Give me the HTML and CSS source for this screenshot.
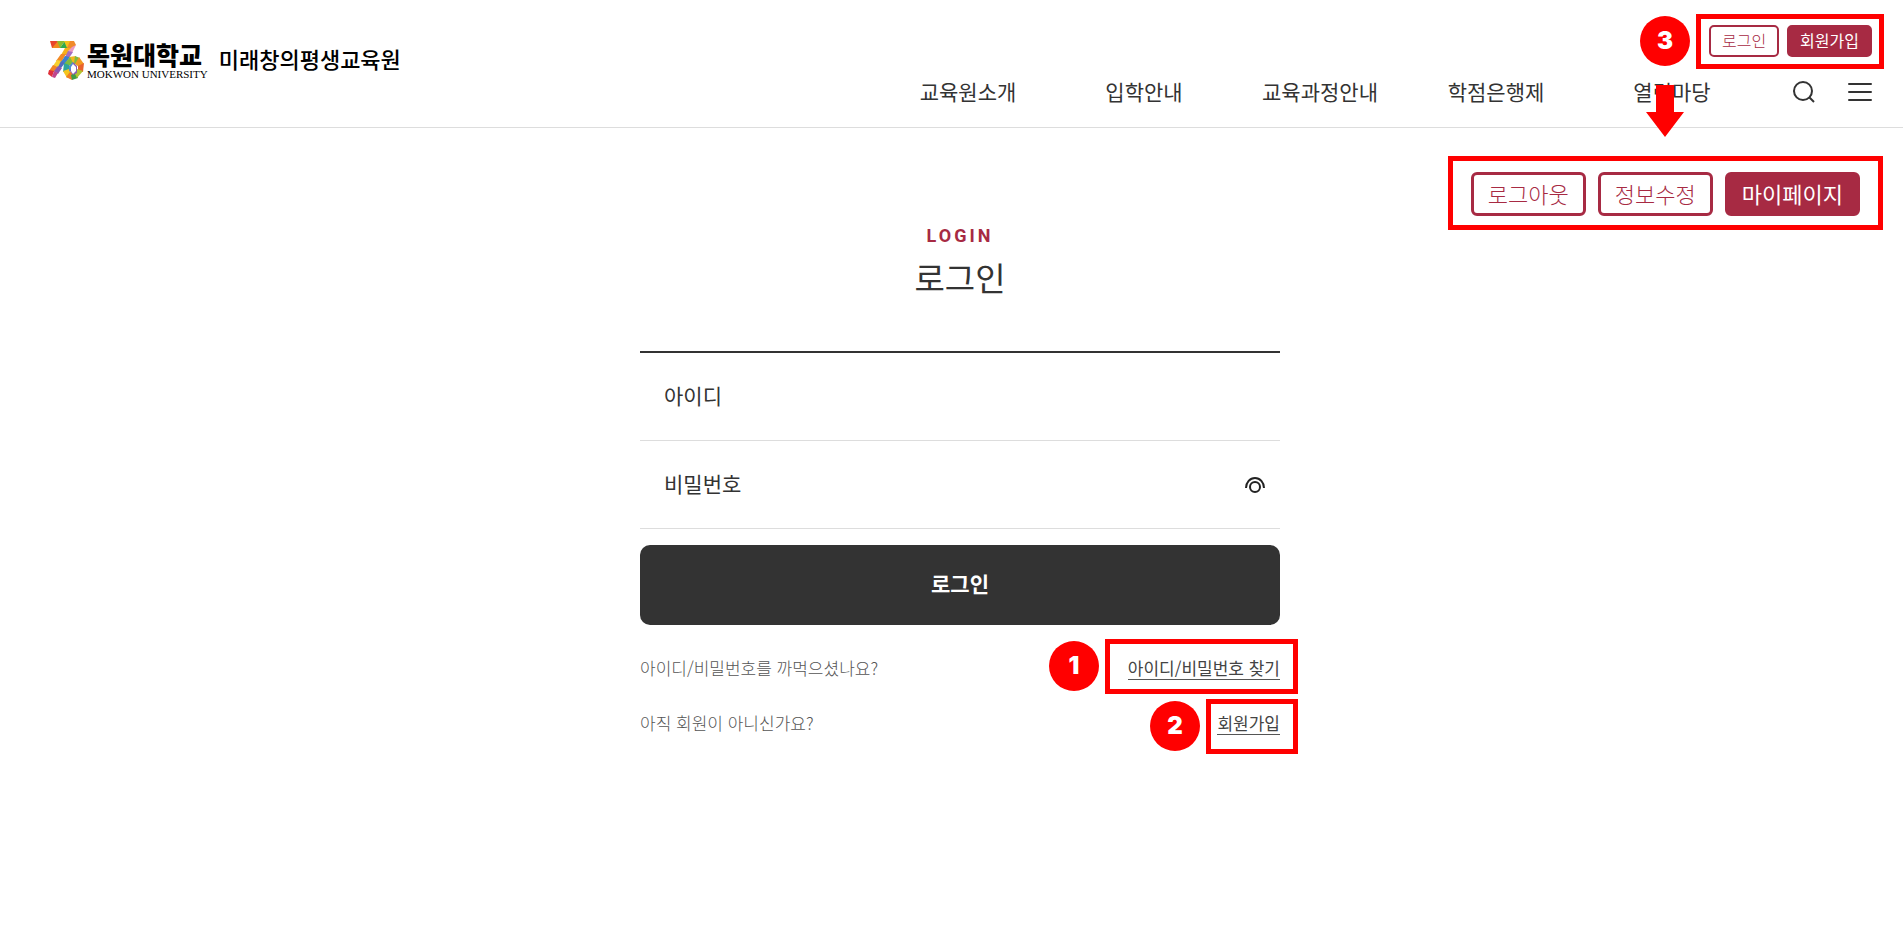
FILE: index.html
```html
<!DOCTYPE html>
<html lang="ko">
<head>
    <meta charset="UTF-8">
    <meta name="viewport" content="width=device-width, initial-scale=1.0">
    <title>로그인 | 목원대학교 미래창의평생교육원</title>
    <link rel="stylesheet" href="styles.css">
</head>
<body>

    <header class="header">
        <a class="logo" href="#">
            <svg class="logo-mark" width="36" height="40" viewBox="0 0 36 40" aria-hidden="true">
                <!-- 7 -->
                <path fill="#e8452c" d="M2 1h8v7H4z"/>
                <path fill="#f18a1f" d="M4 8l6-7 3 7z"/>
                <path fill="#8dbb2e" d="M9 1h8l-5 7z"/>
                <path fill="#2fa94c" d="M12 8l5-7 3 7z"/>
                <path fill="#f6c01c" d="M16 1h8l-5 7z"/>
                <path fill="#f08a2a" d="M22 1h4l2 4-5 5-4-2z"/>
                <path fill="#f6b01c" d="M17 8h6l-4 7-6 0z"/>
                <path fill="#f28a24" d="M13 14h5l-4 7-6 0z"/>
                <path fill="#f8cf2d" d="M9 20l5 1-4 6-5-1z"/>
                <path fill="#f28324" d="M5 25l5 2-4 5-5-1z"/>
                <path fill="#e0303a" d="M1 30l5 1-2 6-4-3z"/>
                <path fill="#eb9ac0" d="M28 5l-4 8-4-2 4-4z"/>
                <path fill="#a56cc0" d="M20 11l5 1-4 6-4-1z"/>
                <path fill="#3a80d0" d="M17 16l5 1-5 7-4-2z"/>
                <path fill="#4f6cc0" d="M13 21l4 2-4 5-3-1z"/>
                <path fill="#8a58b0" d="M10 26l4 2-4 6-4-3z"/>
                <path fill="#c0458c" d="M6 31l4 2-3 5-3-1z"/>
                <!-- 0 -->
                <path fill="#f2b81e" d="M21 17l7-1-1 8-5 2z"/>
                <path fill="#7dbb42" d="M27 16l5 2-3 6-3 0z"/>
                <path fill="#f19a20" d="M31 17l5 7-5 3-4-3z"/>
                <path fill="#e9622c" d="M36 23l-1 9-5-1 0-5z"/>
                <path fill="#7dbb42" d="M22 17l-6 7 5 2 4-3z"/>
                <path fill="#2ea59a" d="M16 23l-1 9 7-1-1-6z"/>
                <path fill="#f5c51d" d="M15 31l4 7 5-4-3-5z"/>
                <path fill="#ef7d24" d="M18 37l6 3 3-6-5-2z"/>
                <path fill="#3e9d45" d="M24 40l6-2-2-6-5 3z"/>
                <path fill="#b4c52f" d="M29 38l6-7-6-2-2 5z"/>
                <path fill="#8a5fb4" d="M25 22l4 4 0 7-4 2-3-4 0-5z"/>
                <path fill="#4f8fd0" d="M25 22l-4 4 0 6 4-6z"/>
                <path fill="#fff" d="M25 24l3 3v4l-3 3-2-3v-4z"/>
            </svg>
            <span class="logo-univ">
                <strong class="logo-ko">목원대학교</strong>
                <span class="logo-en">MOKWON UNIVERSITY</span>
            </span>
            <span class="logo-center">미래창의평생교육원</span>
        </a>

        <div class="header-side">
            <div class="member member-top">
                <a class="member-btn" href="#">로그인</a>
                <a class="member-btn member-btn-fill" href="#">회원가입</a>
                <span class="mark mark-member"><b class="mark-num">3</b></span>
            </div>
            <div class="header-menu">
                <nav class="gnb">
                    <a href="#">교육원소개</a>
                    <a href="#">입학안내</a>
                    <a href="#">교육과정안내</a>
                    <a href="#">학점은행제</a>
                    <a href="#">열린마당</a>
                </nav>
                <button class="icon-btn" type="button" aria-label="검색">
                    <svg width="24" height="24" viewBox="0 0 24 24" fill="none" stroke="#333" stroke-width="2">
                        <circle cx="11" cy="11" r="9"/>
                        <path d="M17 17l5 5"/>
                    </svg>
                </button>
                <button class="icon-btn" type="button" aria-label="전체메뉴">
                    <svg width="24" height="24" viewBox="0 0 24 24" fill="none" stroke="#333" stroke-width="2" stroke-linecap="round">
                        <path d="M1 4h22M1 12h22M1 20h22"/>
                    </svg>
                </button>
            </div>
        </div>
    </header>

    <!-- member buttons after login -->
    <div class="after-login">
        <svg class="arrow" width="38" height="52" viewBox="0 0 38 52" aria-hidden="true">
            <path fill="#f00" d="M10 0h18v27h10L19 52 0 27h10z"/>
        </svg>
        <div class="member member-big">
            <a class="member-btn" href="#">로그아웃</a>
            <a class="member-btn" href="#">정보수정</a>
            <a class="member-btn member-btn-fill" href="#">마이페이지</a>
        </div>
    </div>

    <main class="main">
        <section class="login">
            <p class="login-en">LOGIN</p>
            <h1 class="login-title">로그인</h1>

            <form class="login-form">
                <div class="field">
                    <label for="userId">아이디</label>
                    <input id="userId" type="text">
                </div>
                <div class="field">
                    <label for="userPw">비밀번호</label>
                    <input id="userPw" type="password">
                    <button class="icon-btn" type="button" aria-label="비밀번호 보기">
                        <svg width="22" height="18" viewBox="0 0 22 18" fill="none" stroke="#222" stroke-width="2">
                            <path d="M2 12a9 10 0 0 1 18 0"/>
                            <circle cx="11" cy="11" r="5"/>
                        </svg>
                    </button>
                </div>
                <button class="submit" type="submit">로그인</button>
            </form>

            <div class="help">
                <span>아이디/비밀번호를 까먹으셨나요?</span>
                <a href="#">아이디/비밀번호 찾기</a>
                <span class="mark mark-find"><b class="mark-num">1</b></span>
            </div>
            <div class="help">
                <span>아직 회원이 아니신가요?</span>
                <a href="#">회원가입</a>
                <span class="mark mark-join"><b class="mark-num">2</b></span>
            </div>
        </section>
    </main>

</body>
</html>
```

FILE: styles.css
```css
* {
    box-sizing: border-box;
}
body {
    position: relative;
    margin: 0;
    background-color: #fff;
    color: #333;
    font-family: "Noto Sans CJK KR", sans-serif;
    font-size: 16px;
}
a {
    color: inherit;
    text-decoration: none;
}
button {
    padding: 0;
    border: 0;
    background: none;
    font-family: inherit;
    cursor: pointer;
}
svg {
    display: block;
}

/* header */
.header {
    display: flex;
    justify-content: space-between;
    align-items: flex-start;
    height: 128px;
    padding: 0 31px 0 48px;
    border-bottom: 1px solid #ddd;
}
.logo {
    display: flex;
    align-items: flex-start;
    padding-top: 40px;
    color: #000;
}
.logo-univ {
    display: flex;
    flex-direction: column;
    margin-left: 3px;
}
.logo-ko {
    font-size: 25px;
    font-weight: 900;
    line-height: 28px;
}
.logo-en {
    font-family: "Liberation Serif", serif;
    font-size: 11px;
    line-height: 12px;
}
.logo-center {
    margin-left: 11px;
    font-size: 22px;
    font-weight: 500;
    line-height: 36px;
}
.header-side {
    display: flex;
    flex-direction: column;
    align-items: flex-end;
    gap: 20px;
    padding-top: 25px;
}
.header-menu {
    display: flex;
    align-items: center;
    height: 30px;
}
.header-menu .icon-btn {
    margin-left: 32px;
}
.gnb {
    display: grid;
    grid-template-columns: repeat(5, 176px);
}
.gnb a {
    padding-bottom: 2px;
    font-size: 21px;
    line-height: 28px;
    text-align: center;
}

/* member buttons */
.member {
    position: relative;
    display: flex;
    gap: 8px;
}
.member-btn {
    height: 32px;
    padding: 0 11px;
    border: 2px solid #a72a43;
    border-radius: 5px;
    background-color: #fff;
    color: #a72a43;
    font-size: 16px;
    font-weight: 300;
    line-height: 27px;
}
.member-btn-fill {
    background-color: #a72a43;
    color: #fff;
    font-weight: 400;
}
.after-login {
    position: absolute;
    top: 85px;
    right: 20px;
    display: flex;
    flex-direction: column;
}
.arrow {
    margin: 0 0 19px 198px;
}
.member-big {
    gap: 12px;
    padding: 11px 18px 9px;
    border: 5px solid #f00;
}
.member-big .member-btn {
    height: 44px;
    padding: 0 14px;
    border-width: 3px;
    border-radius: 6px;
    font-size: 22px;
    line-height: 36px;
}

/* login */
.main {
    padding: 0 0 160px 17px;
}
.login {
    max-width: 640px;
    margin: 0 auto;
    padding-top: 94px;
}
.login-en {
    margin: 0;
    color: #a72a43;
    font-family: Roboto, sans-serif;
    font-size: 18px;
    font-weight: 700;
    letter-spacing: 3px;
    line-height: 28px;
    text-align: center;
}
.login-title {
    margin: 2px 0 49px;
    font-size: 33px;
    font-weight: 400;
    line-height: 50px;
    text-align: center;
}
.login-form {
    border-top: 2px solid #333;
}
.field {
    display: flex;
    align-items: center;
    padding: 0 14px 0 24px;
    border-bottom: 1px solid #ddd;
}
.field label {
    padding-bottom: 4px;
    font-size: 21px;
    line-height: 28px;
}
.field input {
    flex: 1;
    min-width: 0;
    height: 87px;
    padding: 0 16px;
    border: 0;
    outline: 0;
    color: #333;
    font-family: inherit;
    font-size: 21px;
}
.submit {
    width: 100%;
    height: 80px;
    margin-top: 16px;
    padding-bottom: 4px;
    border-radius: 10px;
    background-color: #333;
    color: #fff;
    font-size: 21px;
    font-weight: 700;
}
.help {
    position: relative;
    display: flex;
    justify-content: space-between;
    margin-top: 31px;
    color: #555;
    font-size: 17px;
    font-weight: 300;
    line-height: 24px;
}
.help a {
    border-bottom: 1px solid #555;
    color: #444;
    font-weight: 400;
    line-height: 23px;
}

/* numbered red marks */
.mark {
    position: absolute;
    height: 55px;
    border: 5px solid #f00;
    pointer-events: none;
}
.mark-num {
    position: absolute;
    top: -3px;
    right: 100%;
    width: 50px;
    height: 50px;
    margin-right: 11px;
    border-radius: 50%;
    background-color: #f00;
    color: #fff;
    font-family: Inter, sans-serif;
    font-size: 24px;
    font-weight: 900;
    line-height: 50px;
    text-align: center;
}
.mark-member {
    top: -11px;
    right: -12px;
    left: -13px;
}
.mark-find {
    top: -17px;
    right: -18px;
    width: 193px;
}
.mark-join {
    top: -12px;
    right: -18px;
    width: 92px;
}
```
